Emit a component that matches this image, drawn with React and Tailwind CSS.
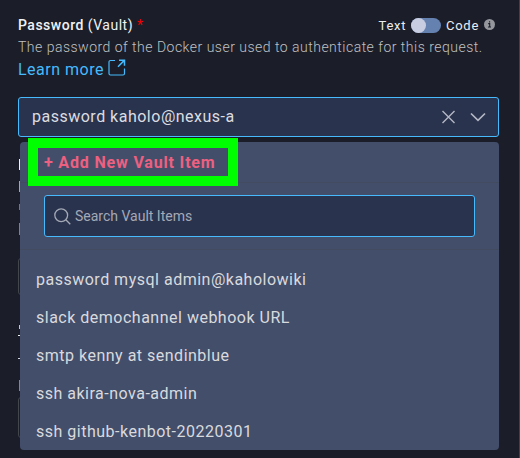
const ITEMS = [
  "password mysql admin@kaholowiki",
  "slack demochannel webhook URL",
  "smtp kenny at sendinblue",
  "ssh akira-nova-admin",
  "ssh github-kenbot-20220301",
];

function ExternalLinkIcon() {
  return (
    <svg className="mb-[4px] ml-[4px] h-[18px] w-[18px]" viewBox="0 0 18 18" fill="none" stroke="#46bafc" strokeWidth="1.2">
      <path d="M7 1.5H2.5a1.5 1.5 0 0 0-1.5 1.5V14.5A1.5 1.5 0 0 0 2.5 16H15a1.5 1.5 0 0 0 1.5-1.5V9.5" />
      <path d="M11 1.2H16.5V6.7M16.3 1.4L10 7.7" strokeWidth="1.5" />
    </svg>
  );
}

function Header() {
  return (
    <>
      <div className="flex h-[22px] items-center justify-between">
        <div className="whitespace-pre text-[14px] leading-[22px] tracking-[0.5px] text-[#f0f1f3]">
          <span className="font-medium">Password</span> (Vault) <span className="text-[#f00000]">*</span>
        </div>
        <div className="flex items-center pt-px text-[13px] leading-[22px] tracking-[0.7px] text-[#ebecef]">
          <span>Text</span>
          <span className="ml-[5px] flex h-[15px] w-[30px] rounded-full bg-[#6581b0]">
            <span className="h-[15px] w-[15px] rounded-full bg-[#c8cde1]" />
          </span>
          <span className="ml-[5px]">Code</span>
          <svg className="mb-[2px] ml-[5px] mr-[4px] h-[11px] w-[11px]" viewBox="0 0 11 11">
            <circle cx="5.5" cy="5.5" r="5.5" fill="#95979d" />
            <path d="M4.2 4.6h1.5v3.2M4 8h3M5.6 2.2v1.3" stroke="#1b1e29" strokeWidth="1.1" fill="none" />
          </svg>
        </div>
      </div>
      <p className="h-[22px] whitespace-nowrap text-[14px] font-light leading-[22px] tracking-[0.49px] text-[#c0c1c3]">
        The password of the Docker user used to authenticate for this request.
      </p>
      <a className="flex h-[22px] items-center pt-[2px] text-[16px] leading-[22px] tracking-[0.5px] text-[#46bafc]">
        Learn more
        <ExternalLinkIcon />
      </a>
    </>
  );
}

function SelectField() {
  return (
    <div className="mt-[17px] flex h-10 w-[481px] items-center rounded-[3px] border border-[#46bafc] bg-[#2a334e] pl-[13px] pr-[12px]">
      <span className="flex-1 text-[16px] tracking-[0.5px] text-[#dcdde0]">password kaholo@nexus-a</span>
      <svg className="mr-[15px] h-[14px] w-[14px]" viewBox="0 0 14 14" fill="none" stroke="#b4b8c4" strokeWidth="1.4">
        <path d="M1.5 1L13.5 13M13.5 1L1.5 13" />
      </svg>
      <svg className="h-[10px] w-[16px]" viewBox="0 0 16 10" fill="none" stroke="#b4b8c4" strokeWidth="1.7">
        <path d="M1 1.5L8 8.3L15 1.5" />
      </svg>
    </div>
  );
}

function CoveredForm() {
  return (
    <div className="h-[311px] w-[2px] shrink-0 overflow-hidden pt-[5px]">
      <div className="ml-px mt-[17px] h-[11px] bg-[#f0f1f3]" />
      <div className="ml-px mt-[11px] h-[11px] bg-[#a5a6a8]" />
      <div className="ml-px mt-[12px] h-[6px] bg-[#75767c]" />
      <div className="ml-px mt-[13px] h-[12px] bg-[#3d96c9]" />
      <div className="mt-[23px] h-[37px] w-10 rounded-[3px] border border-[#43464b]" />
      <div className="ml-px mt-[30px] h-[4px] bg-[#c5c6c9]" />
      <div className="mt-[6px] h-px bg-[#f0f1f3]" />
      <div className="mt-[22px] h-px bg-[#d5d6d9]" />
      <div className="ml-px mt-[21px] h-[11px] bg-[#85868a]" />
      <div className="mt-[6px] h-[41px] w-10 rounded-[3px] border border-[#43464b]" />
    </div>
  );
}

function VaultMenu() {
  return (
    <div className="mt-[5px] h-[308px] w-[479px] rounded-[4px] bg-[#434e6b]">
      <div className="flex h-[41px] items-center border-b border-[#424b60] pt-px">
        <span className="ml-6 text-[16px] font-bold leading-[20px] tracking-[0.83px] text-[#ee6080]">+ Add New Vault Item</span>
      </div>
      <div className="h-[67px] border-b border-[#424b60] px-6 pt-[12px]">
        <div className="flex h-[42px] items-center rounded-[3px] border border-[#46bafc] bg-[#2a334e] pl-[9px]">
          <svg className="h-[17px] w-[17px]" viewBox="0 0 17 17" fill="none" stroke="#a4a9b6" strokeWidth="1.3">
            <circle cx="7.2" cy="7.2" r="6.4" />
            <path d="M11.8 11.8L16.3 16.3" />
          </svg>
          <span className="ml-1 text-[14px] text-[#a4a9b6]">Search Vault Items</span>
        </div>
      </div>
      <ul className="pl-4 pt-[11px] text-[16px] tracking-[0.5px] text-[#d9dadd]">
        {ITEMS.map((item) => (
          <li key={item} className="h-[38px] whitespace-nowrap leading-[38px]">{item}</li>
        ))}
      </ul>
    </div>
  );
}

export default function App() {
  return (
    <div className="relative h-[458px] w-[520px] overflow-hidden border-r border-[#3f4249] bg-[#1b1e29] pl-[18px] pr-[20px] pt-[14px] font-[Roboto,sans-serif]">
      <Header />
      <SelectField />
      <div className="flex">
        <CoveredForm />
        <VaultMenu />
      </div>
      <div className="absolute left-[28px] top-[138px] h-12 w-[210px] border-10 border-[#00ff00]" />
    </div>
  );
}
